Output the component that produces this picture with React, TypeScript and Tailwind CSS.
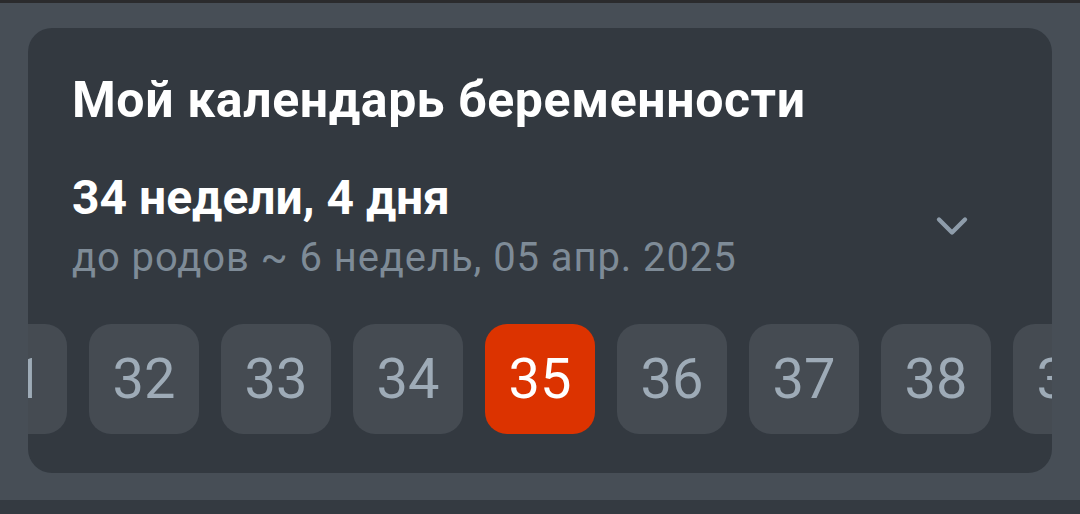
import React from 'react';
import { ChevronDown } from 'lucide-react';

const weeks = [31, 32, 33, 34, 35, 36, 37, 38, 39];
const currentWeek = 35;

const App: React.FC = () => {
  return (
    <div
      className="w-[1080px] h-[514px] flex flex-col bg-[#474e56] overflow-hidden"
      style={{ fontFamily: 'Roboto, "Noto Sans", sans-serif' }}
    >
      <div className="h-[3px] bg-[#2b2b2d]" />
      <div className="flex-1 px-[28px] pt-[25px]">
        {/* Pregnancy calendar card */}
        <div className="h-[445px] rounded-[24px] bg-[#333940] overflow-hidden">
          <div className="px-[44px] pt-[43px]">
            <h2 className="text-[50px] leading-[58px] font-bold tracking-[0.6px] text-white">Мой календарь беременности</h2>
            <div className="mt-[41px] flex items-center justify-between">
              <div>
                <div className="text-[48px] leading-[56px] font-bold text-white">34 недели, 4 дня</div>
                <div className="mt-[8px] text-[40px] leading-[48px] tracking-[0.9px] text-[#7e8b97]">до родов ~ 6 недель, 05 апр. 2025</div>
              </div>
              <ChevronDown className="mr-[30px] w-[52px] h-[52px] text-[#8e9caa]" strokeWidth={2} />
            </div>
          </div>

          {/* Week strip */}
          <div className="mt-[42px] ml-[-71px] flex gap-[22px]">
            {weeks.map((week) => (
              <div
                key={week}
                className={
                  week === currentWeek
                    ? 'shrink-0 w-[110px] h-[110px] rounded-[22px] bg-[#dc3300] flex items-center justify-center text-[56px] text-white'
                    : 'shrink-0 w-[110px] h-[110px] rounded-[22px] bg-[#454b52] flex items-center justify-center text-[56px] text-[#9eabb7]'
                }
              >
                {week}
              </div>
            ))}
          </div>
        </div>
      </div>
      <div className="h-[14px] bg-[#343a41]" />
    </div>
  );
};

export default App;
